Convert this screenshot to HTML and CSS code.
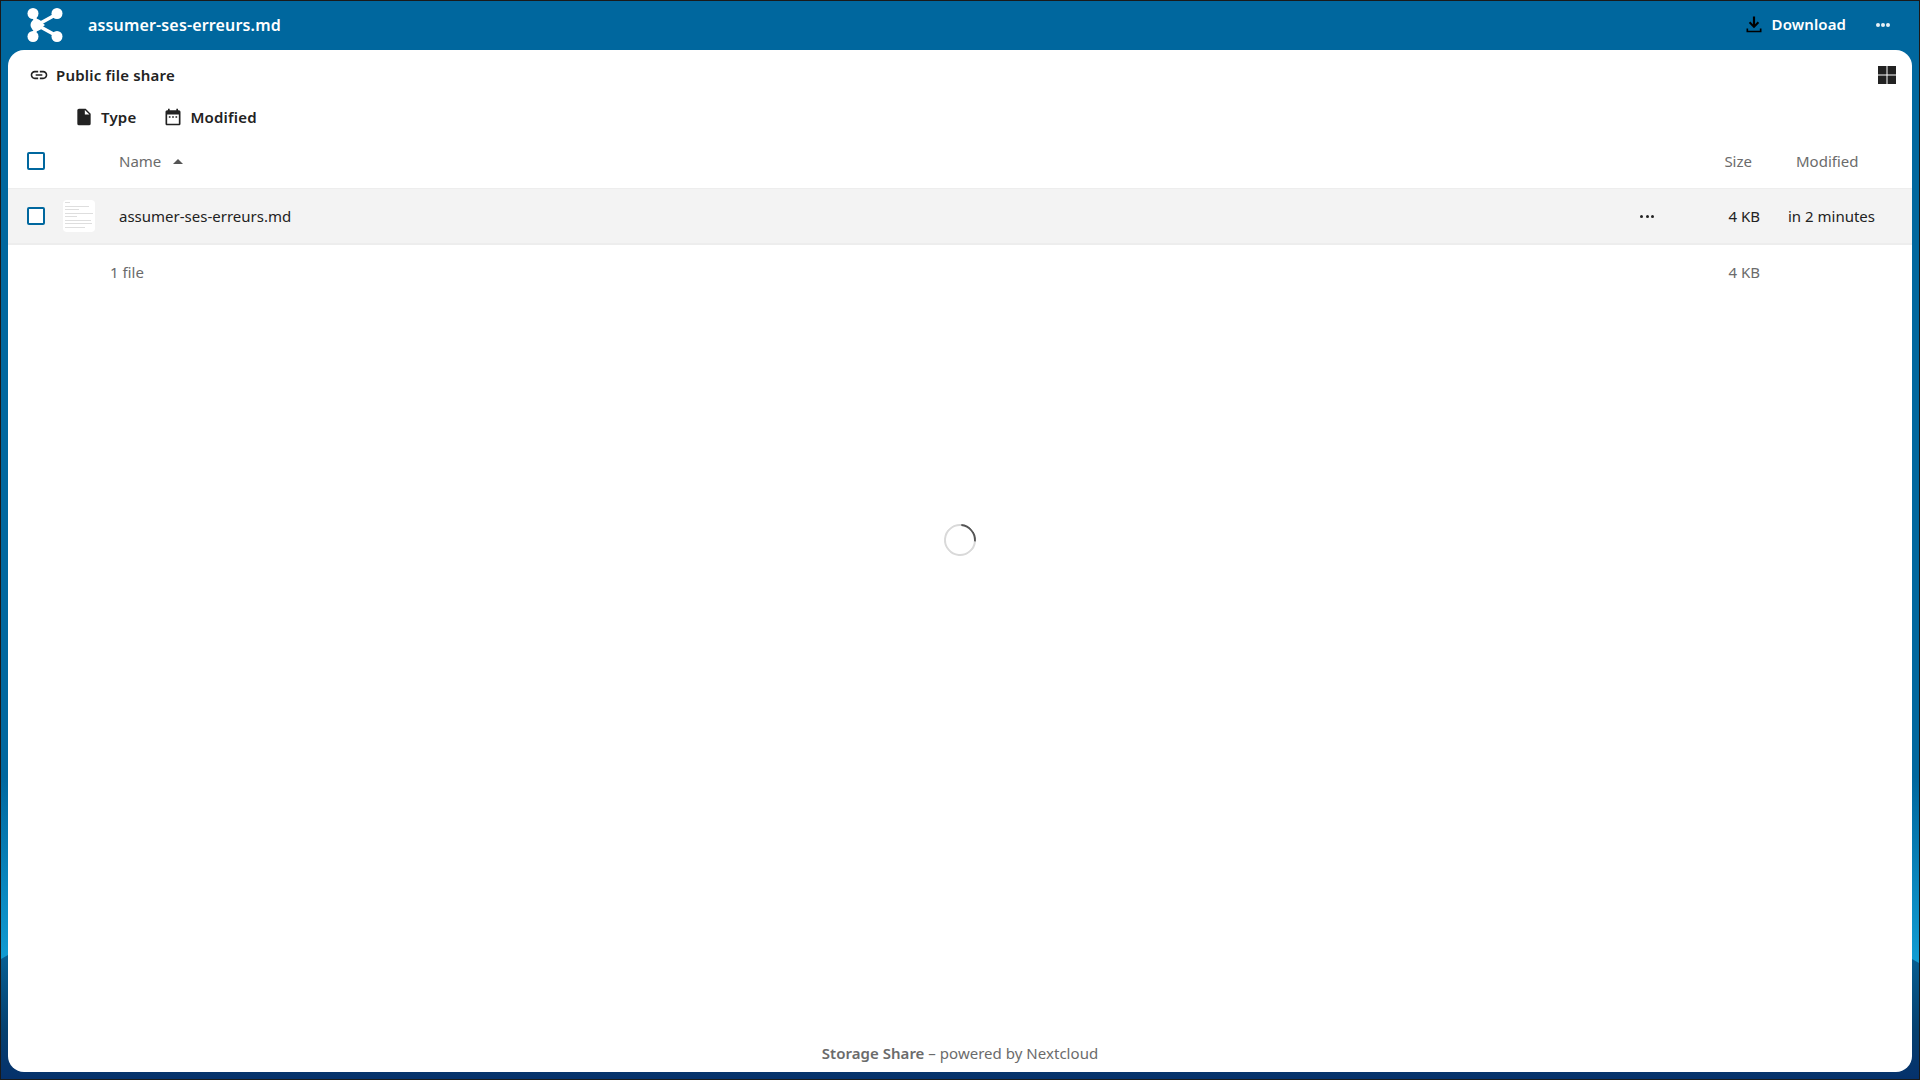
FILE: index.html
```html
<!DOCTYPE html>
<html lang="en">
<head>
<meta charset="utf-8">
<title>assumer-ses-erreurs.md</title>
<link rel="stylesheet" href="styles.css">
</head>
<body>
<div class="window">
  <div class="wave"></div>
  <header class="topbar">
    <div class="brand">
      <svg class="logo" width="36" height="36" viewBox="0 0 36 36" aria-hidden="true">
        <g stroke="#fff" stroke-width="3.500" fill="none">
          <path d="M6 7 L10 18 L6 29"/>
          <path d="M30 7 L10 18 L30 29"/>
        </g>
        <g fill="#fff">
          <path d="M9 11 L18 18 L9 25z"/>
          <circle cx="6" cy="6.500" r="5.500"/>
          <circle cx="30" cy="6.500" r="5.500"/>
          <circle cx="9.500" cy="18" r="6"/>
          <circle cx="6" cy="29.500" r="5.500"/>
          <circle cx="30" cy="29.500" r="5.500"/>
        </g>
      </svg>
      <span class="title">assumer-ses-erreurs.md</span>
    </div>
    <div class="actions">
      <span class="download">
        <svg width="20" height="20" viewBox="0 0 24 24" aria-hidden="true"><path fill="#000" d="M5 20h14v-2.500h2V22H3v-4.500h2V20zM13.300 3v9.200l3.100-3.100 1.800 1.800L12 17l-6.200-6.100 1.800-1.800 3.100 3.100V3z"/></svg>
        <span>Download</span>
      </span>
      <span class="dots dots-light"><i></i><i></i><i></i></span>
    </div>
  </header>
  <main class="card">
    <div class="share-row">
      <div class="share-label">
        <svg width="20" height="20" viewBox="0 0 24 24" aria-hidden="true"><path fill="#222" d="M3.900 12c0-1.710 1.390-3.100 3.100-3.100h4V7H7c-2.760 0-5 2.240-5 5s2.240 5 5 5h4v-1.900H7c-1.710 0-3.100-1.390-3.100-3.100zM8 13h8v-2H8v2zm9-6h-4v1.900h4c1.710 0 3.100 1.390 3.100 3.100s-1.390 3.100-3.100 3.100h-4V17h4c2.760 0 5-2.240 5-5s-2.240-5-5-5z"/></svg>
        <span>Public file share</span>
      </div>
      <svg class="grid-icon" width="20" height="20" viewBox="0 0 20 20" aria-hidden="true"><path fill="#222" d="M1 1h8.500v8.500H1zM10.500 1H19v8.500h-8.500zM1 10.500h8.500V19H1zM10.500 10.500H19V19h-8.500z"/></svg>
    </div>
    <div class="filters">
      <span class="filter">
        <svg width="20" height="20" viewBox="0 0 24 24" aria-hidden="true"><path fill="#222" d="M13 9V3.500L18.500 9M6 2c-1.110 0-2 .89-2 2v16a2 2 0 0 0 2 2h12a2 2 0 0 0 2-2V8l-6-6H6z"/></svg>
        <span>Type</span>
      </span>
      <span class="filter">
        <svg width="20" height="20" viewBox="0 0 24 24" aria-hidden="true"><path fill="#222" d="M19 4h-1V2h-2v2H8V2H6v2H5C3.900 4 3 4.900 3 6v14c0 1.100.9 2 2 2h14c1.100 0 2-.9 2-2V6c0-1.100-.9-2-2-2zm0 16H5V9h14v11zM7 11h2v2H7zm4 0h2v2h-2zm4 0h2v2h-2z"/></svg>
        <span>Modified</span>
      </span>
    </div>
    <div class="row head">
      <span class="cell-check"><span class="checkbox"></span></span>
      <span class="cell-thumb"></span>
      <span class="cell-name">Name <span class="caret"></span></span>
      <span class="cell-actions"></span>
      <span class="cell-size">Size</span>
      <span class="cell-mod head-mod">Modified</span>
    </div>
    <div class="row file">
      <span class="cell-check"><span class="checkbox"></span></span>
      <span class="cell-thumb">
        <span class="thumb">
          <i class="l1"></i><i class="l2"></i><i class="l3"></i><i class="l4"></i><i class="l5"></i><i class="l6"></i><i class="l7"></i><i class="l8"></i>
        </span>
      </span>
      <span class="cell-name">assumer-ses-erreurs.md</span>
      <span class="cell-actions"><span class="dots dots-dark"><i></i><i></i><i></i></span></span>
      <span class="cell-size">4 KB</span>
      <span class="cell-mod">in 2 minutes</span>
    </div>
    <div class="row summary">
      <span class="cell-check"></span>
      <span class="summary-name">1 file</span>
      <span class="cell-size">4 KB</span>
      <span class="cell-mod"></span>
    </div>
    <div class="loading"><span class="spinner"></span></div>
    <footer class="footer"><strong>Storage Share</strong> – powered by Nextcloud</footer>
  </main>
</div>
</body>
</html>
```
FILE: styles.css
```css
* { box-sizing: border-box; }
html, body { margin: 0; height: 100%; }
body {
  font-family: "Noto Sans", "Open Sans", sans-serif;
  font-size: 15px;
  color: #222;
  background: #111;
  overflow: hidden;
}
.window {
  height: 100vh;
  position: relative;
  overflow: hidden;
  border: 1px solid #1a1a1a;
  display: flex;
  flex-direction: column;
  background: linear-gradient(180deg, #00679e 0%, #00679e 72%, #14a5dc 92%);
}
.wave {
  position: absolute;
  left: 0;
  right: 0;
  top: 954px;
  bottom: 0;
  background: linear-gradient(180deg, #075f93 0%, #05406f 60%, #05316b 100%);
  clip-path: polygon(0 4px, 7px 0, calc(100% - 7px) 4px, 100% 8px, 100% 100%, 0 100%);
}
.topbar {
  height: 49px;
  flex: none;
  position: relative;
  padding: 0 29px 1px 26px;
  display: flex;
  align-items: center;
  justify-content: space-between;
  color: #fff;
}
.brand { display: flex; align-items: center; gap: 25px; }
.logo { display: block; }
.title { font-size: 16px; font-weight: 600; letter-spacing: .15px; }
.actions { display: flex; align-items: center; gap: 30px; }
.download { display: flex; align-items: center; gap: 8px; padding-bottom: 2px; font-weight: 600; letter-spacing: .1px; }
.download svg { display: block; }
.dots { display: inline-flex; align-items: center; }
.dots i { display: block; border-radius: 50%; }
.dots-light { gap: 1px; }
.dots-light i { background: #fff; opacity: .9; width: 4px; height: 4px; }
.dots-dark { gap: 2.500px; }
.dots-dark i { background: #222; width: 3px; height: 3px; }
.card {
  flex: 1;
  position: relative;
  margin: 0 7px 7px 7px;
  background: #fff;
  border-radius: 16px;
  display: flex;
  flex-direction: column;
  min-height: 0;
}
.share-row {
  height: 50px;
  flex: none;
  padding: 0 15px 0 21px;
  display: flex;
  align-items: center;
  justify-content: space-between;
}
.share-label { display: flex; align-items: center; gap: 7px; font-weight: 600; letter-spacing: .2px; }
.share-label svg, .filter svg, .grid-icon { display: block; }
.filters {
  height: 34px;
  flex: none;
  padding-left: 66px;
  display: flex;
  align-items: center;
  gap: 27px;
}
.filter { display: flex; align-items: center; gap: 7px; font-weight: 600; letter-spacing: .2px; }
.row {
  display: flex;
  align-items: center;
  flex: none;
}
.head { height: 54px; color: #6b6b6b; }
.file {
  height: 57px;
  background: #f3f3f3;
  border-top: 1px solid #ededed;
  border-bottom: 2px solid #ededed;
}
.summary { height: 53px; color: #6b6b6b; }
.cell-check { width: 55px; flex: none; padding-left: 19px; display: flex; }
.checkbox { display: block; width: 18px; height: 18px; border: 2px solid #00679e; border-radius: 2px; background: #fff; }
.cell-thumb { width: 56px; flex: none; display: flex; }
.cell-name { flex: 1; display: flex; align-items: center; gap: 12px; }
.caret { width: 0; height: 0; border-left: 5px solid transparent; border-right: 5px solid transparent; border-bottom: 5px solid #555; }
.cell-actions { width: 120px; flex: none; display: flex; padding-left: 66px; }
.cell-size { width: 66px; flex: none; text-align: right; }
.cell-mod { width: 152px; flex: none; text-align: left; padding-left: 28px; }
.head .cell-size { padding-right: 8px; }
.head-mod { padding-left: 36px; }
.summary-name { flex: 1; padding-left: 47px; }
.thumb {
  width: 32px;
  height: 32px;
  border-radius: 4px;
  background: #fff;
  display: flex;
  flex-direction: column;
  gap: 2.500px;
  padding: 2px;
}
.thumb i { display: block; height: 1px; background: #dedede; }
.l1 { width: 5px; }
.l2 { width: 24px; }
.l3 { width: 14px; }
.l4 { width: 28px; }
.l5 { width: 12px; }
.l6 { width: 26px; }
.l7 { width: 27px; }
.l8 { width: 20px; }
.loading { flex: 1; position: relative; min-height: 0; }
.spinner {
  position: absolute;
  left: 50%;
  top: 226px;
  margin-left: -16px;
  width: 32px;
  height: 32px;
  border-radius: 50%;
  border: 2px solid #d9d9d9;
  border-right-color: #555;
  transform: rotate(-40deg);
}
.footer {
  height: 38px;
  flex: none;
  text-align: center;
  color: #6b6b6b;
  line-height: 38px;
  letter-spacing: .03px;
}
.footer strong { font-weight: 600; }
```
